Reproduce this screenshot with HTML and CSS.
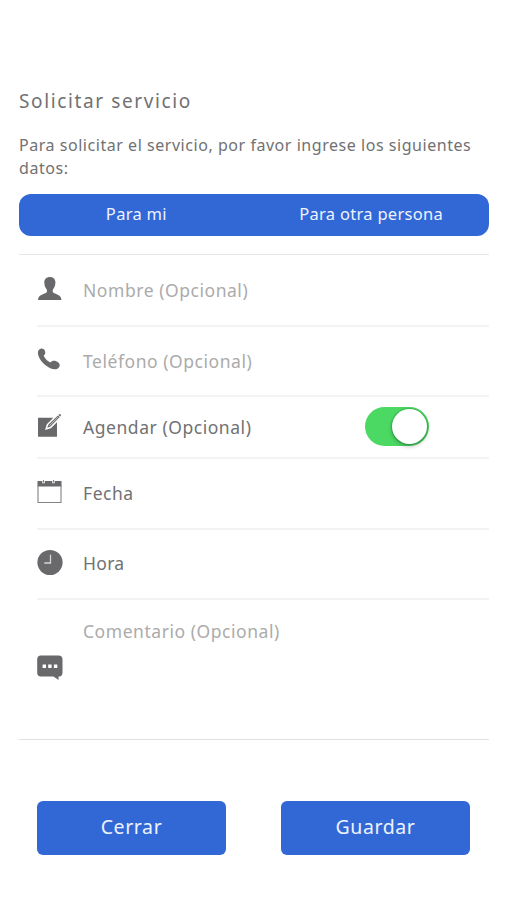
FILE: index.html
```html
<!DOCTYPE html>
<html lang="es">
<head>
<meta charset="utf-8">
<title>Solicitar servicio</title>
<link rel="stylesheet" href="styles.css">
</head>
<body>
<main class="page">
  <h1 class="title">Solicitar servicio</h1>
  <p class="intro">Para solicitar el servicio, por favor ingrese los siguientes<br>datos:</p>
  <div class="segment"><div class="segment-item">Para mi</div><div class="segment-item">Para otra persona</div></div>
  <section class="form">
    <div class="row">
      <svg class="icon" viewBox="0 0 28 28"><path d="M14 2c-3.600 0-5.700 2.200-5.700 5.500 0 3.500 1.300 5.300 2.300 6.700.7 1.300.6 3-.7 3.700C6.500 19.500 2.300 20 2 25h23.500c-.3-5-4.500-5.500-7.700-7.100-1.400-.7-1.400-2.400-.7-3.700 1-1.400 2.300-3.200 2.300-6.700C19.400 4.200 17.300 2 14 2Z"/></svg>
      <span class="label hint">Nombre (Opcional)</span>
    </div>
    <div class="row">
      <svg class="icon" viewBox="0 0 28 28"><path d="M3.300 3.600C5.500 1.400 8.200 2.600 9 5c.6 2 .3 3.500-1.400 4.500 1.500 3.300 3.600 5.400 6.900 7.100 1.400-2 3.100-2.300 5.200-1.500 2.700 1 4.900 3.100 3.700 5.700-1.300 2.700-5 3.200-8.500 1.700C8.300 19.600 3.600 14.500 2.100 8.600 1.700 6.500 1.900 5 3.300 3.600Z"/></svg>
      <span class="label hint">Teléfono (Opcional)</span>
    </div>
    <div class="row row-switch">
      <svg class="icon" viewBox="0 0 28 28"><path d="M2 5.800h15.300l-6.500 6.400-1.700 5.900 5.800-1.800 6.100-6.100v14.600H2Z"/><path d="m11 16 1.200-4 10-9.400 2 2-9.300 10.100Z" fill="#fff"/><path d="m11.200 15.800 1.300-3.300 9.500-9.100 1.700 1.700-9.200 9.300ZM22.500 2.900l.8-.8c.7-.6 2.200.9 1.600 1.600l-.8.900Z"/><path d="m13.300 13.900 8.700-8.700" stroke="#ddd" stroke-width=".8"/></svg>
      <span class="label">Agendar (Opcional)</span>
      <span class="switch"><i class="knob"></i></span>
    </div>
    <div class="row">
      <svg class="icon icon-calendar" viewBox="0 0 28 28"><path d="M1.500 4h4.800v2.200h2.500V4h7.400v2.200h2.500V4h6.800v5.400h-24Z"/><path d="M2 8v17.500h23V8M7.500 3v2.500M17.500 3v2.500" fill="none" stroke="#828284" stroke-width="1.100"/></svg>
      <span class="label">Fecha</span>
    </div>
    <div class="row">
      <svg class="icon" viewBox="0 0 28 28"><circle cx="14" cy="13.500" r="12.600"/><path d="M14.500 5.800v8.200H8.300" fill="none" stroke="#d5d5d6" stroke-width="1.300"/></svg>
      <span class="label hora">Hora</span>
    </div>
    <div class="row row-comment">
      <svg class="icon" viewBox="0 0 28 28"><path d="M5 2.500h17.500a4 4 0 0 1 4 4v13.400a4 4 0 0 1-4 3.700V27l-5-3.400H5a3.800 3.800 0 0 1-3.800-3.800V6.300A3.800 3.800 0 0 1 5 2.500Z"/><path d="M6.600 11.500h3.400v3.400H6.600Zm5.600 0h3.400v3.400h-3.400Zm5.700 0h3.400v3.400h-3.400Z" fill="#fff"/></svg>
      <span class="label hint">Comentario (Opcional)</span>
    </div>
  </section>
  <footer class="actions"><button class="btn">Cerrar</button><button class="btn">Guardar</button></footer>
</main>
</body>
</html>
```
FILE: styles.css
```css
* { box-sizing: border-box; }
body { margin: 0; background: #fff; color: #717173; font-family: "Noto Sans", sans-serif; }
.page { width: 507px; height: 900px; padding: 86px 18.500px 0 19px; overflow: hidden; }
.title { margin: 0; font-size: 19px; line-height: 30px; font-weight: 400; letter-spacing: 1.620px; }
.intro { margin: 18px 0 0; font-size: 16px; line-height: 23px; letter-spacing: .540px; white-space: nowrap; }
.segment { display: flex; height: 42.500px; margin-top: 13.500px; border-radius: 12px; background: #3267d6; color: #edf3ff; }
.segment-item { flex: 1; text-align: center; font-size: 16.500px; line-height: 39px; letter-spacing: .300px; }
.form { margin-top: 18px; padding-top: 1px; border-top: 1px solid #e6e6e6; border-bottom: 1px solid #e0e0e0; height: 486px; }
.row { display: flex; align-items: center; height: 70.700px; margin-left: 18px; border-bottom: 2px solid #f3f3f3; }
.row-switch { height: 61.500px; }
.row-comment { height: 139px; border: 0; align-items: flex-start; }
.icon { flex: none; width: 28px; height: 28px; margin: 0 0 2px -1px; fill: #69696c; }
.icon-calendar { margin-bottom: 4px; }
.label { margin: 0 0 1px 19px; font-size: 17.500px; line-height: 26px; letter-spacing: .550px; white-space: nowrap; }
.hora { letter-spacing: .300px; }
.hint { color: #ababab; }
.row-comment .icon { margin-top: 53px; }
.row-comment .label { margin-top: 18px; }
.switch { width: 64px; height: 39px; margin: 0 59.500px 2px auto; padding: 2px; border-radius: 20px; background: #4bd964; }
.knob { display: block; width: 35px; height: 35px; margin-left: auto; border-radius: 50%; background: #fff; box-shadow: 0 2px 4px rgba(0,0,0,.3), 0 0 1px 1px rgba(0,90,20,.2); }
.actions { display: flex; justify-content: space-between; margin: 60.500px 18.500px 0 18px; }
.btn { width: 189px; height: 54px; padding: 0 0 2px; border: 0; border-radius: 6px; background: #3267d6; color: #edf3ff; font: 19.500px/52px "Noto Sans", sans-serif; letter-spacing: .600px; }
```
